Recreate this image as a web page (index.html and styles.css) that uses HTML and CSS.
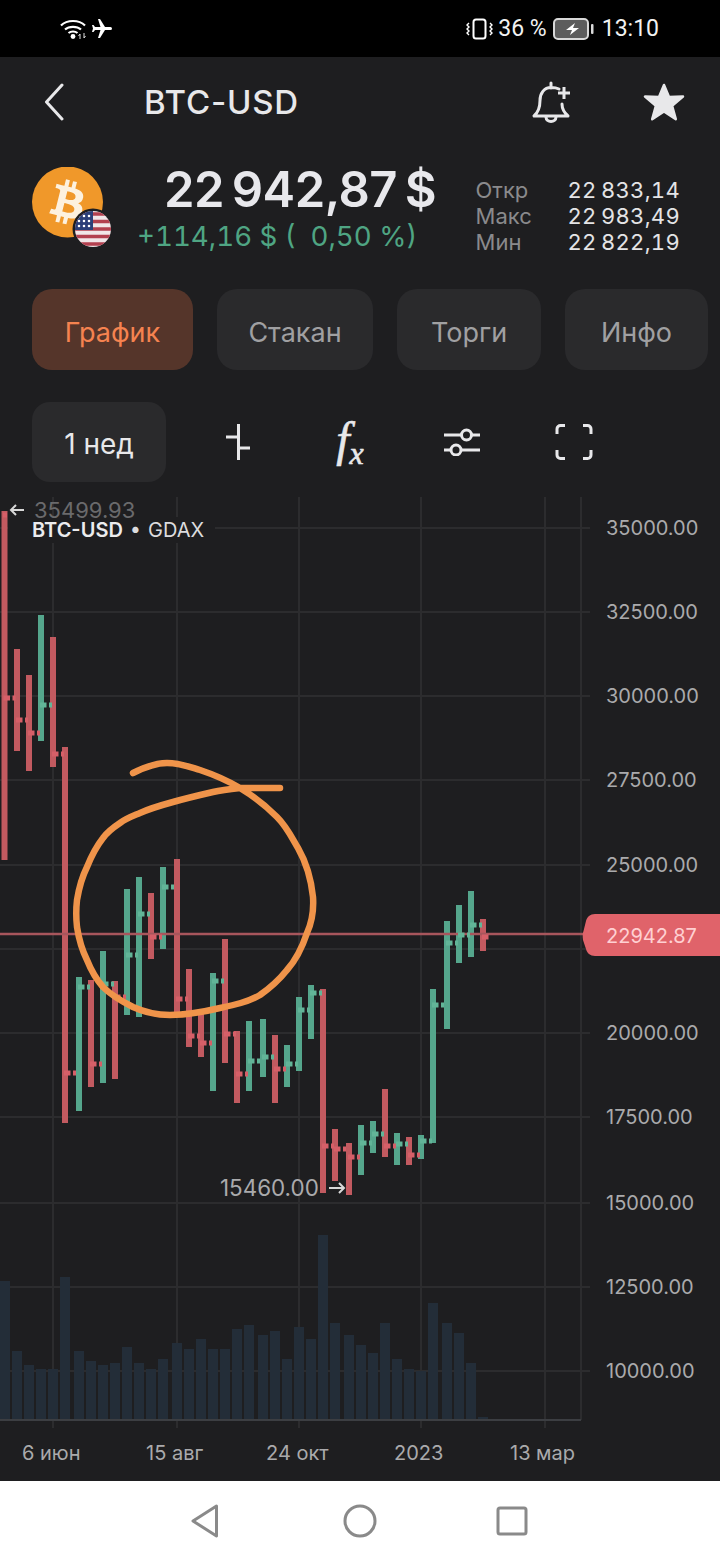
FILE: index.html
```html
<!DOCTYPE html>
<html lang="ru">
<head>
<meta charset="utf-8">
<title>BTC-USD</title>
<link rel="stylesheet" href="styles.css">
</head>
<body>
<div class="app">
  <div class="statusbar">
    <div class="status-left">
      <svg class="i-wifi" width="28" height="22" viewBox="0 0 28 22"><path d="M1 7.5C7 1.5 19 1.5 25 7.5M5 11.500C9 8 17 8 21 11.500M8.500 15C11 13 15 13 17.500 15" fill="none" stroke="#fff" stroke-width="2.200"/><circle cx="13" cy="18.500" r="2.400" fill="#fff"/><path d="M20 21v-5l-1.500 2M24 15v5l1.500-2" fill="none" stroke="#ddd" stroke-width="1"/></svg>
      <svg class="i-plane" width="24" height="24" viewBox="0 0 24 24"><path transform="rotate(90 12 12)" d="M21 16v-2l-8-5V3.500a1.500 1.500 0 0 0-3 0V9l-8 5v2l8-2.500V19l-2 1.500V22l3.500-1 3.500 1v-1.500L13 19v-5.500l8 2.500z" fill="#fff"/></svg>
    </div>
    <div class="status-right">
      <svg width="28" height="22" viewBox="0 0 28 22"><rect x="7.500" y="1.500" width="12" height="19" rx="2.500" fill="none" stroke="#fff" stroke-width="2"/><path d="M3 5l-2 2 2 2-2 2 2 2-2 2 2 2M24 5l2 2-2 2 2 2-2 2 2 2-2 2" fill="none" stroke="#fff" stroke-width="1.400"/></svg>
      <span class="status-pct">36 %</span>
      <svg width="41" height="22" viewBox="0 0 41 22"><rect x="1" y="1" width="34" height="20" rx="4" fill="#5c5c5c" stroke="#d8d8d8" stroke-width="2"/><path d="M22 5l-9 7h6l-2 5 9-7h-6z" fill="#fff"/><rect x="38" y="6" width="2.500" height="10" rx="1" fill="#d8d8d8"/></svg>
      <span class="status-time">13:10</span>
    </div>
  </div>

  <header class="header">
    <svg class="i-back" width="20" height="38" viewBox="0 0 20 38"><path d="M18 2L2.500 19 18 36" fill="none" stroke="#e8e8ea" stroke-width="3" stroke-linecap="round" stroke-linejoin="round"/></svg>
    <h1 class="title">BTC-USD</h1>
    <svg class="i-bell" width="40" height="42" viewBox="532 80 40 42"><path d="M552 82v5M560 88c-2-1-5-1.500-8-1.500-7 0-11 6-11 13 0 8-2 12-6 15.500h34c-4-3.500-6-7-6-12" fill="none" stroke="#e8e8ea" stroke-width="3" stroke-linejoin="round" stroke-linecap="round"/><path d="M547 116c0 6 10 6 10 0" fill="none" stroke="#e8e8ea" stroke-width="3"/><path d="M565 86v12M559 92h12" fill="none" stroke="#e8e8ea" stroke-width="3"/></svg>
    <svg class="i-star" width="42" height="40" viewBox="643 81 42 40"><path d="M664 84l5 12.100 14-.500-10.900 9.200 3.700 13.400-11.800-7.700-11.800 7.700 3.700-13.400-10.900-9.200 14 .500z" fill="#e8e8ea" stroke="#e8e8ea" stroke-width="2.500" stroke-linejoin="round"/></svg>
  </header>

  <section class="quote">
    <svg class="logo" width="82" height="82" viewBox="0 0 82 82">
      <defs><clipPath id="flagclip"><circle cx="61" cy="62" r="18"/></clipPath></defs>
      <circle cx="35.500" cy="35" r="35.500" fill="#f0982a"/>
      <g transform="translate(0 0) scale(2.960)"><path fill="#fdf1de" fill-rule="evenodd" d="M17.288 10.291c.24-1.590-.974-2.450-2.640-3.030l.54-2.153-1.315-.33-.525 2.107c-.345-.087-.705-.167-1.064-.25l.526-2.127-1.320-.33-.54 2.165c-.285-.067-.565-.132-.84-.2l-1.815-.45-.35 1.407s.975.225.955.236c.535.136.63.486.615.766l-1.477 5.920c-.075.166-.24.406-.614.314.015.02-.96-.24-.96-.24l-.66 1.510 1.710.426.93.242-.54 2.190 1.320.327.54-2.170c.36.1.705.19 1.050.273l-.51 2.154 1.320.33.545-2.190c2.240.427 3.930.257 4.640-1.774.57-1.637-.03-2.580-1.217-3.196.854-.193 1.500-.76 1.680-1.930h.01zm-3.010 4.220c-.404 1.640-3.157.75-4.050.53l.72-2.900c.896.23 3.757.67 3.330 2.370zm.41-4.240c-.37 1.490-2.662.735-3.405.55l.654-2.640c.744.18 3.137.524 2.750 2.084v.006z"/></g>
      <circle cx="61" cy="62" r="20.500" fill="#1e1e20"/>
      <g clip-path="url(#flagclip)">
        <rect x="43" y="44" width="36" height="36" fill="#f1e6e8"/>
        <path d="M43 47h36M43 54.500h36M43 62h36M43 69.500h36M43 77h36" stroke="#b3404f" stroke-width="3.500"/>
        <rect x="43" y="44" width="18" height="19" fill="#2c3f78"/>
        <path d="M47 49h.01M52 49h.01M57 49h.01M47 54h.01M52 54h.01M57 54h.01M47 59h.01M52 59h.01M57 59h.01" stroke="#fff" stroke-width="2.600" stroke-linecap="round"/>
      </g>
    </svg>
    <div class="quote-main">
      <div class="price">22&#8201;942,87&#8201;$</div>
      <div class="change">+114,16 $ (&nbsp;&nbsp;0,50 %)</div>
    </div>
    <dl class="stats">
      <dt>Откр</dt><dd>22&#8201;833,14</dd>
      <dt>Макс</dt><dd>22&#8201;983,49</dd>
      <dt>Мин</dt><dd>22&#8201;822,19</dd>
    </dl>
  </section>

  <nav class="tabs">
    <div class="tab tab-active">График</div>
    <div class="tab">Стакан</div>
    <div class="tab">Торги</div>
    <div class="tab">Инфо</div>
  </nav>

  <div class="toolbar">
    <div class="period">1 нед</div>
    <div class="tool">
      <svg width="24" height="36" viewBox="0 0 24 36"><path d="M12.500 0v36M0 13h12.500M12.500 24H24" fill="none" stroke="#e8e8ea" stroke-width="3"/></svg>
    </div>
    <div class="tool"><span class="fx">f<span class="fx-x">x</span></span></div>
    <div class="tool">
      <svg width="38" height="28" viewBox="0 0 38 28"><path d="M1 7h17M29 7h8M1 22h7M19 22h18" fill="none" stroke="#e8e8ea" stroke-width="3"/><circle cx="23.500" cy="7" r="5" fill="none" stroke="#e8e8ea" stroke-width="3"/><circle cx="13" cy="22" r="5" fill="none" stroke="#e8e8ea" stroke-width="3"/></svg>
    </div>
    <div class="tool">
      <svg width="38" height="36" viewBox="0 0 38 36"><path d="M2 10V5a3.500 3.500 0 0 1 3.500-3.500H10M28 1.500h4.500A3.500 3.500 0 0 1 36 5v5M36 26v5a3.500 3.500 0 0 1-3.500 3.500H28M10 34.500H5.500A3.500 3.500 0 0 1 2 31v-5" fill="none" stroke="#e8e8ea" stroke-width="3"/></svg>
    </div>
  </div>

  <svg class="chart" width="720" height="999" viewBox="0 482 720 999">
    <path class="grid" d="M0 528H590M0 612H590M0 696H590M0 780H590M0 865H590M0 949H590M0 1033H590M0 1117H590M0 1203H590M0 1287H590M0 1371H590"/>
    <path class="grid" d="M53 497V1428M177 497V1428M299 497V1428M421 497V1428M545 497V1428M581 497V1420"/>
    <rect class="label-bg" x="8" y="517" width="207" height="26"/>

    <path class="vol" d="M0 1281h10V1420H0zM12 1351h10V1420H12zM24 1365h10V1420H24zM36 1369h10V1420H36zM48 1369h10V1420H48zM60 1277h10V1420H60zM74 1351h10V1420H74zM86 1361h10V1420H86zM98 1365h10V1420H98zM110 1363h10V1420H110zM122 1347h10V1420H122zM134 1363h10V1420H134zM146 1369h10V1420H146zM158 1359h10V1420H158zM172 1343h10V1420H172zM184 1349h10V1420H184zM196 1339h10V1420H196zM208 1349h10V1420H208zM220 1349h10V1420H220zM232 1329h10V1420H232zM244 1325h10V1420H244zM258 1335h10V1420H258zM270 1331h10V1420H270zM282 1359h10V1420H282zM294 1327h10V1420H294zM306 1339h10V1420H306zM318 1235h10V1420H318zM330 1323h10V1420H330zM344 1335h10V1420H344zM356 1345h10V1420H356zM368 1353h10V1420H368zM380 1323h10V1420H380zM392 1359h10V1420H392zM404 1369h10V1420H404zM416 1371h10V1420H416zM428 1303h10V1420H428zM442 1323h10V1420H442zM454 1333h10V1420H454zM466 1363h10V1420H466zM478 1417h10V1420H478z"/>
    <path class="axis" d="M0 1420H581"/>

    <path class="bar-red" d="M4.500 511V860M17 649V751M29 675V771M53 637V767M65 747V1123M91 980V1087M115 981V1079M151 893V959M177 859V1012M189 969V1047M201 1012V1057M225 939V1063M237 1031V1103M275 1035V1103M323 989V1193M335 1129V1181M349 1143V1195M385 1089V1157M409 1137V1165M483 919V951"/>
    <path class="bar-green" d="M41 615V741M79 977V1111M103 951V1083M127 889V1015M139 877V1017M163 867V949M213 973V1091M249 1021V1091M263 1019V1077M287 1045V1087M299 997V1071M311 985V1039M361 1125V1175M373 1121V1153M397 1133V1165M421 1135V1159M433 989V1143M447 921V1029M459 905V963M471 891V957"/>
    <path class="line-price" d="M0 934H583"/>
    <path class="tick-red" d="M3 515h4M3.500 698h6.500M12.500 698h3M16 720h6.500M25 720h3M28 733h6.500M37 733h3M52 754h6.500M61 754h3M64 1073h6.500M73 1073h3M90 1064h6.500M99 1064h3M114 997h6.500M123 997h3M150 937h6.500M159 937h3M176 999h6.500M185 999h3M188 1036h6.500M197 1036h3M200 1043h6.500M209 1043h3M224 1034h6.500M233 1034h3M236 1074h6.500M245 1074h3M274 1069h6.500M283 1069h3M322 1146h6.500M331 1146h3M334 1149h6.500M343 1149h3M348 1157h6.500M357 1157h3M384 1146h6.500M393 1146h3M408 1155h6.500M417 1155h3M482 937h6.500"/>
    <path class="tick-green" d="M40 705h6.500M49 705h3M78 987h6.500M87 987h3M102 984h6.500M111 984h3M126 955h6.500M135 955h3M138 914h6.500M147 914h3M162 887h6.500M171 887h3M212 981h6.500M221 981h3M248 1061h6.500M257 1061h3M262 1057h6.500M271 1057h3M286 1064h6.500M295 1064h3M298 1010h6.500M307 1010h3M310 993h6.500M319 993h3M360 1143h6.500M369 1143h3M372 1134h6.500M381 1134h3M396 1144h6.500M405 1144h3M420 1141h6.500M429 1141h3M432 1005h6.500M441 1005h3M446 943h6.500M455 943h3M458 935h6.500M467 935h3M470 925h6.500M479 925h3"/>

    <text class="t-hi" x="34" y="518">35499.93</text>
    <path class="arrow-hi" d="M24 510H11M16 505l-5 5 5 5"/>
    <text class="t-sym" x="32" y="537"><tspan class="t-sym-b">BTC-USD</tspan><tspan class="t-sym-dot" dx="7">•</tspan><tspan dx="7">GDAX</tspan></text>

    <text class="t-axis" x="606" y="535">35000.00</text>
    <text class="t-axis" x="606" y="619">32500.00</text>
    <text class="t-axis" x="606" y="703">30000.00</text>
    <text class="t-axis" x="606" y="787">27500.00</text>
    <text class="t-axis" x="606" y="872">25000.00</text>
    <text class="t-axis" x="606" y="956">22500.00</text>
    <text class="t-axis" x="606" y="1040">20000.00</text>
    <text class="t-axis" x="606" y="1124">17500.00</text>
    <text class="t-axis" x="606" y="1210">15000.00</text>
    <text class="t-axis" x="606" y="1294">12500.00</text>
    <text class="t-axis" x="606" y="1378">10000.00</text>

    <path class="tag" d="M595 914H720V956H595C590 956 587 953 586 949L583 940C582.500 936 582.500 934 583.500 931L586 921C587 917 590 914 595 914Z"/>
    <text class="t-tag" x="606" y="943">22942.87</text>

    <text class="t-low" x="220" y="1196">15460.00</text>
    <path class="arrow-lo" d="M329 1188H344M339 1183l5 5-5 5"/>

    <text class="t-date" x="22" y="1460">6 июн</text>
    <text class="t-date" x="146" y="1460">15 авг</text>
    <text class="t-date" x="266" y="1460">24 окт</text>
    <text class="t-date" x="394" y="1460">2023</text>
    <text class="t-date" x="510" y="1460">13 мар</text>

    <path class="scribble" d="M133 773C145 767 155 763 167 763C180 763 190 767 200 770C215 775 230 782 240 788C255 797 268 808 277 817C287 827 292 838 298 848C306 862 311 878 313 897C314 912 312 922 307 933C302 948 296 960 287 970C279 980 270 988 260 995C248 1002 234 1005 220 1008C203 1012 187 1015 170 1015C155 1015 144 1012 133 1007C121 1001 111 995 103 987C96 979 91 970 87 960C82 950 79 940 77 927C76 918 76 909 77 900C79 888 82 877 87 867C91 857 96 847 103 838C108 831 114 827 120 823C127 818 133 816 140 813C151 808 162 805 173 802C187 798 200 795 213 792C222 790 231 789 240 788C253 788 267 788 280 788"/>
  </svg>

  <footer class="navbar">
    <svg width="30" height="36" viewBox="0 0 30 36"><path d="M26.500 3L3 18l23.500 15z" fill="none" stroke="#8a8a8a" stroke-width="3" stroke-linejoin="round"/></svg>
    <svg width="36" height="36" viewBox="0 0 36 36"><circle cx="18" cy="18" r="15" fill="none" stroke="#8a8a8a" stroke-width="3"/></svg>
    <svg class="nav-square" width="32" height="32" viewBox="0 0 32 32"><rect x="2" y="3" width="28" height="26" rx="2" fill="none" stroke="#8a8a8a" stroke-width="3"/></svg>
  </footer>
</div>
</body>
</html>
```
FILE: styles.css
```css
* { box-sizing: border-box; }
html, body { margin: 0; padding: 0; background: #1e1e20; }
body { font-family: Inter, Roboto, "Noto Sans", sans-serif; overflow: hidden; }
.app { width: 720px; height: 1560px; display: flex; flex-direction: column; background: #1e1e20; color: #e8e8ea; overflow: hidden; }

.statusbar { height: 57px; flex: none; background: #000; color: #f2f2f2; display: flex; align-items: center; justify-content: space-between; padding: 0 61px 0 60px; font-family: Roboto, sans-serif; font-size: 23px; }
.status-left, .status-right { display: flex; align-items: center; }
.i-plane { margin-left: 2px; }
.status-right { gap: 4px; }
.status-pct { margin-right: 2px; }
.status-time { margin-left: 4px; }

.header { height: 90px; flex: none; display: flex; align-items: center; padding-left: 44px; padding-right: 35px; }
.title { margin: 0 0 0 80px; font-size: 33px; font-weight: 500; letter-spacing: 0.8px; }
.i-bell { margin-left: auto; }
.i-star { margin-left: 72px; }

.quote { height: 142px; flex: none; display: flex; align-items: flex-start; padding: 20px 40px 0 32px; }
.logo { flex: none; }
.quote-main { margin-left: 24px; display: flex; flex-direction: column; }
.price { margin-left: 26px; font-size: 49px; line-height: 46px; font-weight: 600; letter-spacing: -0.5px; white-space: nowrap; color: #e8e8ec; }
.change { margin: 6px 0 0 -1px; font-size: 27.7px; line-height: 34px; font-variant-numeric: tabular-nums; color: #4fa583; white-space: nowrap; }
.stats { margin: 10px 0 0 auto; display: grid; grid-template-columns: 92px auto; grid-auto-rows: 26px; align-items: center; font-size: 22px; line-height: 26px; }
.stats dt { color: #8a8a8c; }
.stats dd { margin: 0; color: #e4e4e6; text-align: right; letter-spacing: 0.3px; font-variant-numeric: tabular-nums; }

.tabs { height: 81px; flex: none; display: grid; grid-template-columns: 161px 156px 144px 143px; column-gap: 24px; padding-left: 32px; }
.tab { display: flex; align-items: center; justify-content: center; border-radius: 20px; background: #2a2a2c; color: #a0a0a2; font-size: 27px; padding-top: 6px; }
.tab-active { background: #55352a; color: #f58350; }

.toolbar { height: 80px; flex: none; margin-top: 32px; display: flex; padding-left: 32px; }
.period { width: 134px; margin-right: 16px; display: flex; align-items: center; justify-content: center; border-radius: 18px; background: #2a2a2c; color: #e8e8ea; font-size: 28px; padding-top: 3px; }
.tool { width: 112px; display: flex; align-items: center; justify-content: center; }
.fx { font-family: "Liberation Serif", serif; font-style: italic; font-size: 48px; line-height: 40px; color: #e8e8ea; -webkit-text-stroke: 0.6px #e8e8ea; }
.fx-x { font-size: 32px; position: relative; top: 8px; }

.chart { display: block; flex: none; }
.grid { fill: none; stroke: #2c2c2e; stroke-width: 2; }
.axis { fill: none; stroke: #3c3e42; stroke-width: 2; }
.label-bg { fill: #1e1e20; }
.vol { fill: #232d38; }
.bar-red { fill: none; stroke: #c25a60; stroke-width: 6; }
.bar-green { fill: none; stroke: #55a68c; stroke-width: 6; }
.tick-red { fill: none; stroke: #d65f68; stroke-width: 5; }
.tick-green { fill: none; stroke: #62b598; stroke-width: 5; }
.line-price { fill: none; stroke: #a8565c; stroke-width: 2.5; }
.tag { fill: #e0636a; }
.scribble { fill: none; stroke: #f0944a; stroke-width: 6.5; stroke-linecap: round; stroke-linejoin: round; }
.arrow-hi { fill: none; stroke: #d8d8d8; stroke-width: 2; }
.arrow-lo { fill: none; stroke: #d8d8d8; stroke-width: 2; }
.t-axis, .t-date, .t-hi, .t-tag, .t-sym, .t-low { font-family: Inter, Roboto, sans-serif; }
.t-axis { font-size: 20px; fill: #aaaaac; }
.t-low { font-size: 22.4px; fill: #aaaaac; }
.t-date { font-size: 20px; fill: #aaaaac; }
.t-hi { font-size: 22px; fill: #6a6a6c; }
.t-tag { font-size: 20px; fill: #ffd0d2; }
.t-sym { font-size: 20px; fill: #dcdcde; }
.t-sym-b { font-weight: 600; fill: #ececee; }
.t-sym-dot { font-size: 20px; }

.navbar { flex: 1; background: #fff; display: flex; align-items: center; padding-left: 190px; gap: 122px; }
.nav-square { margin-left: -4px; }
```
